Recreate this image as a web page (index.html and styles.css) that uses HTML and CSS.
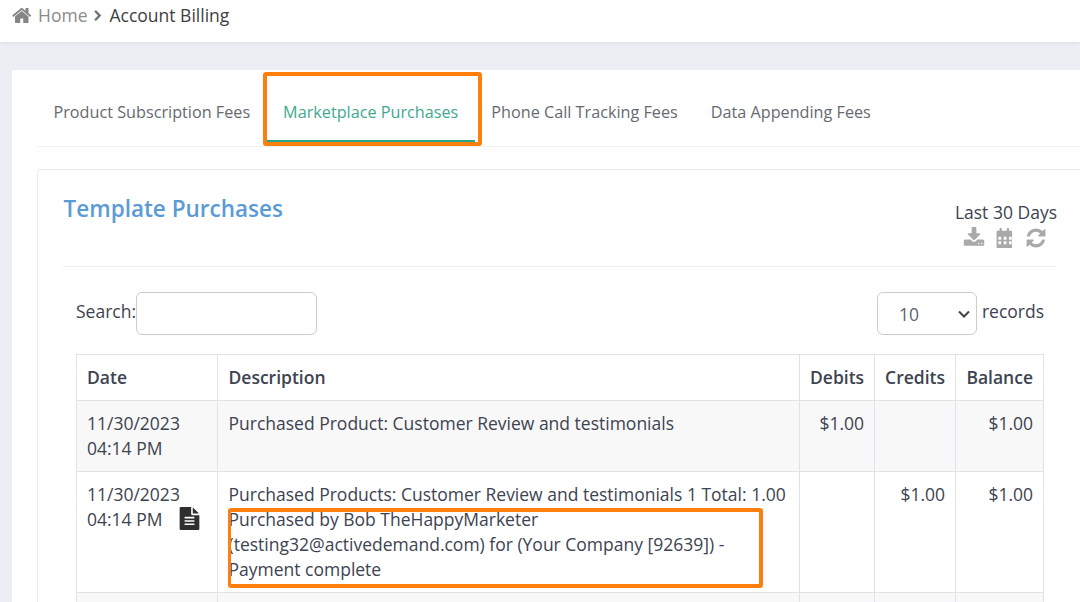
FILE: index.html
```html
<!DOCTYPE html>
<html lang="en">
<head>
<meta charset="utf-8">
<title>Account Billing</title>
<link rel="stylesheet" href="styles.css">
</head>
<body>
<header class="topbar">
  <svg class="ico-home" viewBox="0 0 1792 1792"><path d="M1408 992v480q0 26-19 45t-45 19h-384v-384h-256v384h-384q-26 0-45-19t-19-45v-480q0-1 .5-3t.5-3l575-474 575 474q1 2 1 6zm223-69l-62 74q-8 9-21 11h-3q-13 0-21-7l-692-577-692 577q-12 8-24 7-13-2-21-11l-62-74q-8-10-7-23.500t11-21.500l719-599q32-26 76-26t76 26l244 204v-195q0-14 9-23t23-9h192q14 0 23 9t9 23v408l219 182q10 8 11 21.500t-7 23.500z"/></svg>
  <a class="crumb-home">Home</a>
  <svg class="ico-chev" viewBox="0 0 1792 1792"><path d="M1363 877l-742 742q-19 19-45 19t-45-19l-166-166q-19-19-19-45t19-45l531-531-531-531q-19-19-19-45t19-45l166-166q19-19 45-19t45 19l742 742q19 19 19 45t-19 45z"/></svg>
  <span class="crumb-current">Account Billing</span>
</header>

<main class="outer-card">
  <nav class="tabs">
    <a class="tab">Product Subscription Fees</a>
    <a class="tab active">Marketplace Purchases</a>
    <a class="tab">Phone Call Tracking Fees</a>
    <a class="tab">Data Appending Fees</a>
  </nav>

  <section class="panel">
    <div class="panel-head">
      <h2 class="panel-title">Template Purchases</h2>
      <div class="panel-tools">
        <div class="range">Last 30 Days</div>
        <div class="tool-icons">
          <svg class="tool" viewBox="0 0 1792 1792"><path d="M1344 1344q0-26-19-45t-45-19-45 19-19 45 19 45 45 19 45-19 19-45zm256 0q0-26-19-45t-45-19-45 19-19 45 19 45 45 19 45-19 19-45zm128-224v320q0 40-28 68t-68 28h-1472q-40 0-68-28t-28-68v-320q0-40 28-68t68-28h465l135 136q58 56 136 56t136-56l136-136h464q40 0 68 28t28 68zm-325-569q17 41-14 70l-448 448q-18 19-45 19t-45-19l-448-448q-31-29-14-70 17-39 59-39h256v-448q0-26 19-45t45-19h256q26 0 45 19t19 45v448h256q42 0 59 39z"/></svg>
          <svg class="tool" viewBox="0 0 1792 1792"><path fill-rule="evenodd" d="M280 300h170V140q0-60 60-60h70q60 0 60 60v160h400V140q0-60 60-60h70q60 0 60 60v160h170q70 0 70 70v1270q0 70-70 70H280q-70 0-70-70V370q0-70 70-70zM360 800v240h220V800zm430 0v240h220V800zm430 0v240h220V800zM360 1170v240h220v-240zm430 0v240h220v-240zm430 0v240h220v-240z"/></svg>
          <svg class="tool" viewBox="0 0 1792 1792"><path d="M1639 1056q0 5-1 7-64 268-268 434.500t-478 166.500q-146 0-282.500-55t-243.500-157l-129 129q-19 19-45 19t-45-19-19-45v-448q0-26 19-45t45-19h448q26 0 45 19t19 45-19 45l-137 137q71 66 161 102t187 36q134 0 250-65t186-179q11-17 53-117 8-23 30-23h192q13 0 22.500 9.500t9.500 22.500zm25-800v448q0 26-19 45t-45 19h-448q-26 0-45-19t-19-45 19-45l138-138q-148-137-349-137-134 0-250 65t-186 179q-11 17-53 117-8 23-30 23h-199q-13 0-22.500-9.500t-9.500-22.500v-7q65-268 270-434.500t480-166.500q146 0 284 55.500t245 156.500l130-129q19-19 45-19t45 19 19 45z"/></svg>
        </div>
      </div>
    </div>

    <div class="table-wrap">
      <div class="controls">
        <label class="search">Search:<input class="search-input" type="text"></label>
        <label class="length"><select class="length-select"><option>10</option></select> records</label>
      </div>
      <table class="ledger">
        <colgroup>
          <col class="c-date"><col class="c-desc"><col class="c-num1"><col class="c-num2"><col class="c-num3">
        </colgroup>
        <thead>
          <tr><th>Date</th><th class="desc">Description</th><th class="num">Debits</th><th class="num">Credits</th><th class="num">Balance</th></tr>
        </thead>
        <tbody>
          <tr class="odd">
            <td>11/30/2023<br>04:14 PM</td>
            <td class="desc">Purchased Product: Customer Review and testimonials</td>
            <td class="num">$1.00</td><td class="num"></td><td class="num">$1.00</td>
          </tr>
          <tr>
            <td>11/30/2023<br>04:14 PM<svg class="ico-file" viewBox="0 0 1792 1792" preserveAspectRatio="none"><path d="M1596 476q14 14 28 36h-472v-472q22 14 36 28zm-476 164h544v1056q0 40-28 68t-68 28h-1344q-40 0-68-28t-28-68v-1600q0-40 28-68t68-28h800v544q0 40 28 68t68 28zm160 736v-64q0-14-9-23t-23-9h-704q-14 0-23 9t-9 23v64q0 14 9 23t23 9h704q14 0 23-9t9-23zm0-256v-64q0-14-9-23t-23-9h-704q-14 0-23 9t-9 23v64q0 14 9 23t23 9h704q14 0 23-9t9-23zm0-256v-64q0-14-9-23t-23-9h-704q-14 0-23 9t-9 23v64q0 14 9 23t23 9h704q14 0 23-9t9-23z"/></svg></td>
            <td class="desc">Purchased Products: Customer Review and testimonials 1 Total: 1.00 Purchased by Bob TheHappyMarketer (testing32@activedemand.com) for (Your Company [92639]) - Payment complete</td>
            <td class="num"></td><td class="num">$1.00</td><td class="num">$1.00</td>
          </tr>
          <tr class="odd">
            <td>&nbsp;</td><td></td><td></td><td></td><td></td>
          </tr>
        </tbody>
      </table>
    </div>
  </section>
</main>

<div class="callout callout-tab"></div>
<div class="callout callout-desc"></div>
</body>
</html>
```
FILE: styles.css
```css
* { box-sizing: border-box; }
html, body { margin: 0; height: 602px; overflow: hidden; }
body {
  position: relative;
  background: #ebeff4;
  font-family: "Open Sans", sans-serif;
  font-size: 17.5px;
  line-height: 25px;
  color: #3d4350;
}
.topbar {
  height: 42px;
  padding: 3px 0 0 13px;
  display: flex;
  align-items: flex-start;
  background: #fff;
  box-shadow: 0 1px 4px rgba(0,0,0,.08);
}
.ico-home { width: 21px; height: 21px; margin: 2px 5px 0 -1px; fill: #858585; }
.crumb-home { color: #8b8b8b; }
.ico-chev { width: 12px; height: 12px; margin: 7px 5px 0 5px; fill: #757575; }
.crumb-current { color: #404040; }

.outer-card {
  width: 1120px;
  height: 532px;
  overflow: hidden;
  margin: 28px 0 0 12px;
  padding: 0 0 0 25px;
  background: #fff;
}
.tabs {
  display: flex;
  height: 77px;
  padding-top: 12px;
  border-bottom: 1px solid #eef0f4;
}
.tab {
  padding: 18px 16.500px 0;
  height: 60px;
  font-size: 16.220px;
  color: #666a70;
}
.active { color: #3fa98f; border-bottom: 2px solid #2aa58a; }

.panel {
  width: 1060px;
  margin-top: 22px;
  padding: 0 0 0 25px;
  border: 1px solid #e9ecf0;
  border-radius: 3px;
  background: #fff;
}
.panel-head {
  width: 993px;
  height: 97px;
  display: flex;
  justify-content: space-between;
  border-bottom: 1px solid #eaedf1;
}
.panel-title {
  margin: 23px 0 0 .5px;
  font-size: 22.500px;
  line-height: 32px;
  font-weight: 600;
  color: #5b9bd5;
}
.panel-tools { margin: 30px -1px 0 0; text-align: right; }
.range { line-height: 25px; }
.tool-icons { display: flex; justify-content: flex-end; gap: 9px; padding-right: 10px; margin-top: 2px; }
.tool { width: 22px; height: 22px; fill: #a9a9a9; }

.table-wrap { width: 968px; margin: 25px 0 0 13px; }
.controls { height: 62px; display: flex; justify-content: space-between; align-items: flex-start; }
.search { display: flex; align-items: flex-start; line-height: 38px; }
.search-input { width: 181px; height: 43px; border: 1px solid #ccc; border-radius: 6px; background: #fff; }
.length { display: flex; align-items: flex-start; gap: 5px; line-height: 38px; }
.length-select {
  appearance: none;
  width: 100px; height: 43px;
  padding: 0 0 0 21px;
  font-family: inherit; font-size: 17.5px;
  color: #5c6570;
  background: #fff url("data:image/svg+xml,%3Csvg xmlns='http://www.w3.org/2000/svg' viewBox='0 0 12 8'%3E%3Cpath d='M1 1.500l5 5 5-5' fill='none' stroke='%23444' stroke-width='2'/%3E%3C/svg%3E") no-repeat right 6px center / 12px 8px;
  border: 1px solid #ccc;
  border-radius: 6px;
}

.ledger { width: 967px; border-collapse: collapse; table-layout: fixed; }
.c-date { width: 141px; }
.c-desc { width: 582px; }
.c-num1 { width: 75px; }
.c-num2 { width: 81px; }
.c-num3 { width: 88px; }
.ledger th, .ledger td { border: 1px solid #dfe2e6; padding: 10px; vertical-align: top; text-align: left; font-weight: 400; }
.ledger th { font-weight: 600; height: 46px; }
.ledger .desc { padding-left: 10.500px; }
.ledger .num { text-align: right; }
.odd { background: #f8f8f8; }
.ico-file { width: 23px; height: 23px; fill: #2f2f2f; margin-left: 16px; vertical-align: top; }

.callout { position: absolute; border: 4px solid #ff7f0e; border-radius: 3px; }
.callout-tab { left: 263px; top: 72px; width: 219px; height: 74px; }
.callout-desc { left: 228px; top: 508px; width: 535px; height: 80px; border-left-width: 3px; }
```
